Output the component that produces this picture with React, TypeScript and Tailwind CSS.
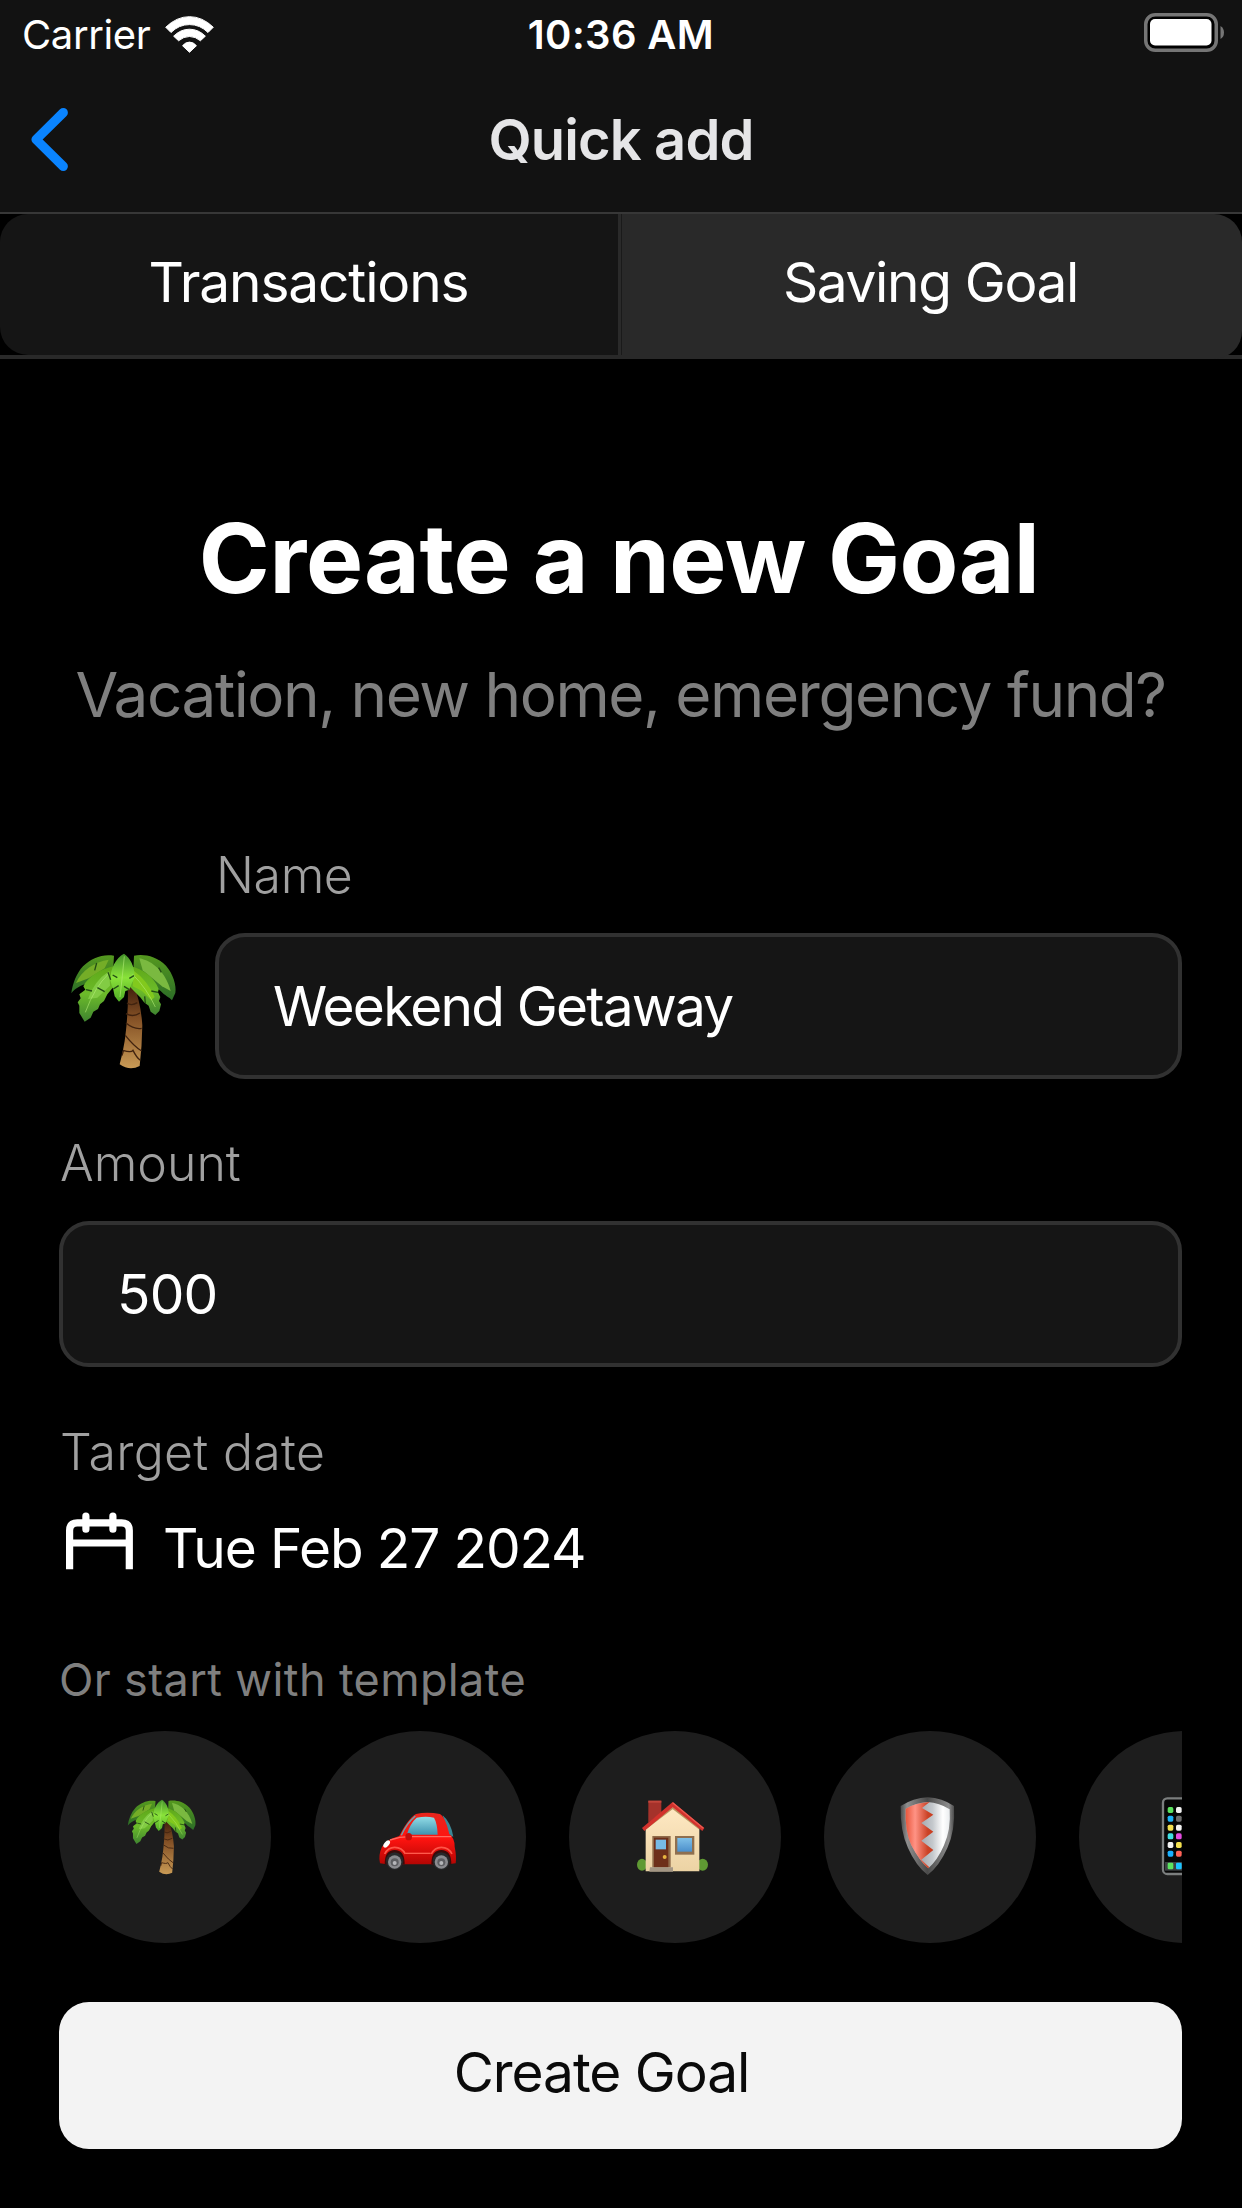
import type { ReactNode } from 'react';

function WifiIcon() {
  return (
    <svg viewBox="495 44 148 112" className="w-[49px] h-[37px]" fill="#fff" stroke="#fff" strokeWidth="3" strokeLinejoin="round">
      <path d="M497 78Q530 46 569 46Q608 46 641 78L625 94Q601 70 569 70Q537 70 513 94Z" />
      <path d="M521 105Q542 84 569 84Q596 84 617 105L602 119Q587 106 569 106Q551 106 536 119Z" />
      <path d="M548 134Q557 123 569 123Q581 123 590 134L569 154Z" />
    </svg>
  );
}

function BatteryIcon() {
  return (
    <svg viewBox="0 0 80 39" className="w-20 h-[39px]">
      <rect x="1.75" y="1.75" width="70.5" height="35.5" rx="9.5" fill="#000" stroke="#757575" strokeWidth="3.5" />
      <rect x="6" y="6" width="61.5" height="26.5" rx="5" fill="#fff" />
      <path d="M76.5 13Q80 15 80 19.5Q80 24 76.5 26Z" fill="#757575" />
    </svg>
  );
}

function BackIcon() {
  return (
    <svg viewBox="90 320 117 196" className="w-[39px] h-[65px]" fill="none">
      <path d="M190 337L108 418L190 499" stroke="#0a84ff" strokeWidth="28" strokeLinecap="round" strokeLinejoin="round" />
    </svg>
  );
}

function CalendarIcon() {
  return (
    <svg viewBox="0 0 70 60" className="w-[70px] h-[60px]" fill="none" stroke="#fff" strokeWidth="7.2">
      <path d="M5.6 58.3V19.5Q5.6 11.8 13.3 11.8H57.6Q65.3 11.8 65.3 19.5V58.3" />
      <path d="M5.6 32H65.3" />
      <path d="M21.9 5.2V18.2M48.9 5.2V18.2" strokeLinecap="round" />
    </svg>
  );
}

function PalmIcon({ id, className }: { id: string; className: string }) {
  return (
    <svg viewBox="-22 -8 360 360" className={className}>
      <defs>
        <linearGradient id={`${id}-trunk`} x1="0" y1="0" x2="0" y2="1">
          <stop offset="0" stopColor="#3a1a0b" />
          <stop offset="0.4" stopColor="#835025" />
          <stop offset="1" stopColor="#c99a55" />
        </linearGradient>
        <linearGradient id={`${id}-outer`} x1="0" y1="0" x2="0" y2="1">
          <stop offset="0" stopColor="#55991f" />
          <stop offset="1" stopColor="#2c6d27" />
        </linearGradient>
        <linearGradient id={`${id}-inner`} x1="0" y1="0" x2="0" y2="1">
          <stop offset="0" stopColor="#5fa818" />
          <stop offset="0.5" stopColor="#6cbb2a" />
          <stop offset="1" stopColor="#3f8430" />
        </linearGradient>
        <linearGradient id={`${id}-mid`} x1="0" y1="0" x2="0" y2="1">
          <stop offset="0" stopColor="#43902a" />
          <stop offset="0.5" stopColor="#8ae33a" />
          <stop offset="1" stopColor="#4faa25" />
        </linearGradient>
      </defs>
      <path d="M169 96C172 150 166 220 160 262Q154 300 145 332Q175 353 205 337Q212 280 213 215C210 170 202 130 186 92Z" fill={`url(#${id}-trunk)`} />
      <path d="M167 148Q180 158 198 147M164 180Q185 192 206 178M164 208Q188 228 211 224M162 245Q188 278 211 292M155 290Q180 298 185 290Q196 312 207 320M156 292L152 306" fill="none" stroke="#41230f" strokeWidth="4" />
      <path d="M128 6C95 0 60 12 35 38C15 60 4 90 0 119C12 104 24 98 40 92L124 72Z" fill={`url(#${id}-outer)`} />
      <path d="M188 6C215 0 255 6 284 36C305 60 316 95 312 118L302 140C294 130 280 126 268 112L186 56Z" fill={`url(#${id}-outer)`} />
      <path d="M204 14C244 22 282 54 298 112L272 98L214 50Z" fill="#7ab940" />
      <path d="M14 88C30 50 70 24 112 18L100 44L52 74Z" fill="#74ad27" />
      <path d="M126 38C84 48 50 70 36 98L42 108L24 122L28 134L19 146L24 156L24 178L40 204L58 192L66 174L80 166L86 152L98 142L108 122L126 100Z" fill={`url(#${id}-inner)`} />
      <path d="M178 38C214 46 248 70 262 106L260 116L267 130L263 142L269 152L264 172L252 184L238 174L232 156L218 146L208 132L196 120L174 98Z" fill={`url(#${id}-inner)`} />
      <path d="M188 52Q228 80 250 130L240 140L212 112L184 98Z" fill="#82c91d" />
      <path d="M114 52Q68 82 50 136L78 132L116 96Z" fill="#82cc44" />
      <path d="M158 0C134 12 116 46 117 80L122 98L126 108L130 128L143 144L158 130L162 112L174 108L180 92L190 72C190 36 176 12 158 0Z" fill={`url(#${id}-mid)`} />
      <path d="M159 8Q154 60 146 130M112 60Q70 100 42 176M184 62Q226 104 252 160" fill="none" stroke="#b5ee78" strokeWidth="2.5" opacity="0.7" />
      <path d="M118 78L110 56M44 108L62 112M78 102L100 114M124 64L138 72M188 66L174 74M126 106L142 96M174 108L158 98M222 148L220 128M260 116L240 112M76 28L70 50M270 56L262 42" fill="none" stroke="#234d14" strokeWidth="4" />
    </svg>
  );
}

function CarIcon() {
  return (
    <svg viewBox="1014 264 234 234" className="size-[78px] overflow-visible">
      <defs>
        <linearGradient id="car-body" x1="0" y1="0" x2="0" y2="1">
          <stop offset="0" stopColor="#e8261d" />
          <stop offset="0.5" stopColor="#ff1410" />
          <stop offset="1" stopColor="#b30503" />
        </linearGradient>
        <linearGradient id="car-glass" x1="0" y1="0" x2="0" y2="1">
          <stop offset="0" stopColor="#92dce6" />
          <stop offset="1" stopColor="#3f93b0" />
        </linearGradient>
      </defs>
      <path d="M1208 316Q1232 336 1240 380L1222 372Z" fill="#3c8796" />
      <path d="M1078 378C1092 350 1110 322 1128 312Q1160 305 1200 312Q1216 320 1228 372Q1244 384 1244 410Q1250 440 1247 460L1225 463H1040L1020 460Q1014 436 1026 410Q1040 388 1078 378Z" fill="url(#car-body)" />
      <path d="M1084 376Q1100 340 1126 318" fill="none" stroke="#63a8b3" strokeWidth="4" />
      <path d="M1100 374Q1112 338 1130 323Q1158 318 1182 323Q1192 340 1193 374Z" fill="url(#car-glass)" />
      <path d="M1050 390Q1084 378 1120 380H1234" fill="none" stroke="#ff6a60" strokeWidth="4" />
      <path d="M1096 430H1172" stroke="#ff5a4c" strokeWidth="4" />
      <path d="M1034 432Q1044 412 1064 412Q1086 412 1096 432M1174 432Q1184 412 1204 412Q1226 412 1236 432" fill="none" stroke="#ff5548" strokeWidth="5" />
      <ellipse cx="1106" cy="380" rx="10" ry="11" fill="#c40d0a" />
      <ellipse cx="1040" cy="402" rx="7" ry="13" fill="#fff" transform="rotate(40 1040 402)" />
      {[1064, 1204].map((cx) => (
        <g key={cx}>
          <path d={`M${cx - 30} 463Q${cx - 30} 420 ${cx} 420Q${cx + 30} 420 ${cx + 30} 463Z`} fill="#3a0b0a" />
          <circle cx={cx} cy="453" r="26" fill="#26282a" />
          <circle cx={cx} cy="456" r="20" fill="#8b8c90" />
          <circle cx={cx} cy="457" r="12" fill="#5d5e62" />
          <circle cx={cx} cy="459" r="6" fill="#b5b6ba" />
        </g>
      ))}
    </svg>
  );
}

function HouseIcon() {
  return (
    <svg viewBox="39 54 234 234" className="size-[78px]">
      <defs>
        <linearGradient id="house-wall" x1="0" y1="0" x2="0" y2="1">
          <stop offset="0" stopColor="#ffe9c4" />
          <stop offset="1" stopColor="#ecd3a4" />
        </linearGradient>
        <linearGradient id="house-glass" x1="0" y1="0" x2="0" y2="1">
          <stop offset="0" stopColor="#7fc0e8" />
          <stop offset="1" stopColor="#4c8fcb" />
        </linearGradient>
      </defs>
      <path d="M85 62H124V98L85 128Z" fill="#a5322b" />
      <path d="M85 62H124V68H85Z" fill="#c2453b" />
      <ellipse cx="66" cy="254" rx="15" ry="18" fill="#5f9a33" />
      <ellipse cx="248" cy="254" rx="16" ry="18" fill="#5f9a33" />
      <path d="M77 146L158 78L238 146V274H77Z" fill="url(#house-wall)" />
      <path d="M77 146L158 84L238 146" fill="none" stroke="#b99763" strokeWidth="5" />
      <path d="M66 144L158 66L253 144L247 153L158 82L73 153Z" fill="#d2322d" />
      <path d="M158 68L250 145" stroke="#ec5a50" strokeWidth="4" />
      <path d="M97 168H152V262H97Z" fill="#8f6b4a" />
      <path d="M102 173H145V262H102Z" fill="#6d2f1a" />
      <path d="M107 179H138V208H107Z" fill="#77bbe6" />
      <circle cx="134" cy="231" r="6" fill="#e6b340" />
      <path d="M90 262H159V275H88Z" fill="#a39684" />
      <path d="M165 168H223V224H165Z" fill="#8f6f4f" />
      <path d="M172 174H216V215H172Z" fill="url(#house-glass)" />
    </svg>
  );
}

function ShieldIcon() {
  return (
    <svg viewBox="0 0 234 234" className="size-[78px] overflow-visible">
      <defs>
        <linearGradient id="shield-rim" x1="0" y1="0" x2="1" y2="0">
          <stop offset="0" stopColor="#4b4b4b" />
          <stop offset="0.12" stopColor="#8f8f8f" />
          <stop offset="0.5" stopColor="#4a4a4a" />
          <stop offset="0.9" stopColor="#8d8d8d" />
          <stop offset="1" stopColor="#484848" />
        </linearGradient>
        <linearGradient id="shield-red" gradientUnits="userSpaceOnUse" x1="52" y1="0" x2="136" y2="0">
          <stop offset="0" stopColor="#e8553a" />
          <stop offset="0.35" stopColor="#ff9385" />
          <stop offset="0.8" stopColor="#cb4327" />
          <stop offset="1" stopColor="#c93c1e" />
        </linearGradient>
        <linearGradient id="shield-white" gradientUnits="userSpaceOnUse" x1="100" y1="0" x2="186" y2="0">
          <stop offset="0" stopColor="#a5aab0" />
          <stop offset="0.4" stopColor="#c5c9cd" />
          <stop offset="0.75" stopColor="#fff" />
          <stop offset="1" stopColor="#e9ecee" />
        </linearGradient>
      </defs>
      <path d="M119 -2Q162 0 198 24Q202 100 178 150Q154 204 119 231Q84 204 60 150Q36 100 38 24Q76 0 119 -2Z" fill="url(#shield-rim)" />
      <path d="M119 12Q154 14 185 34Q189 96 168 142Q148 188 121 211Q94 188 70 142Q50 98 53 32Q84 14 119 12Z" fill="url(#shield-white)" />
      <path d="M125 12L102 30L136 50L100 75L136 101L100 128L136 156L100 185L124 208L120 211Q94 188 70 142Q50 98 53 32Q84 14 125 12Z" fill="url(#shield-red)" />
    </svg>
  );
}

const appRows = [
  { y: 36, colors: ['#5be35f', '#f2f2f2', '#f3d94a', '#19b7ff'] },
  { y: 62, colors: ['#1bb2f7', '#6d6d6d', '#f2f2f2', '#5be35f'] },
  { y: 89, colors: ['#f3e04f', '#f2f2f2', '#19b7ff', '#ff6257'] },
  { y: 115, colors: ['#3fdfe3', '#e34be0', '#f2f2f2', '#5be35f'] },
  { y: 141, colors: ['#f2f2f2', '#f3e04f', '#19b7ff', '#e34be0'] },
  { y: 167, colors: ['#19b0ff', '#ff6257', '#f2f2f2', '#f3e04f'] },
];

function PhoneIcon() {
  return (
    <svg viewBox="0 0 234 234" className="size-[78px] overflow-visible">
      <rect x="60" y="1" width="114" height="227" rx="13" fill="#070707" stroke="#7b7e7e" strokeWidth="7" />
      <rect x="66" y="192" width="102" height="26" fill="#3c4244" />
      {appRows.map((row) =>
        row.colors.map((fill, i) => (
          <rect key={`${row.y}-${i}`} x={74 + i * 25} y={row.y - 9} width="17" height="18" rx="5" fill={fill} />
        ))
      )}
      <rect x="74" y="194" width="17" height="20" rx="4" fill="#5be35f" />
      <rect x="99" y="194" width="17" height="20" rx="4" fill="#19c3ff" />
      <rect x="124" y="194" width="17" height="20" rx="4" fill="#f2f2f2" />
    </svg>
  );
}

const templates: { name: string; icon: ReactNode }[] = [
  { name: 'vacation', icon: <PalmIcon id="palm-template" className="size-[78px]" /> },
  { name: 'car', icon: <CarIcon /> },
  { name: 'home', icon: <HouseIcon /> },
  { name: 'emergency', icon: <ShieldIcon /> },
  { name: 'phone', icon: <PhoneIcon /> },
];

function Label({ children }: { children: ReactNode }) {
  return <p className="pl-px text-[50px] leading-[60px] font-light text-[#a0a0a0]">{children}</p>;
}

function Field({ children }: { children: ReactNode }) {
  return (
    <div className="mt-7 flex h-[146px] items-center rounded-[30px] border-4 border-[#313131] bg-[#151515] pl-[54px] text-[55px] text-white">
      {children}
    </div>
  );
}

export default function App() {
  return (
    <div className="flex h-[2208px] w-[1242px] flex-col overflow-hidden bg-black font-['Inter',sans-serif] text-white">
      <header className="border-b-2 border-[#373737] bg-[#121212]">
        <div className="grid h-[69px] grid-cols-3 items-center pl-[22px] pr-[18px] text-[40px] leading-[69px]">
          <div className="flex items-center gap-[15px]">
            <span className="tracking-[-0.4px]">Carrier</span>
            <WifiIcon />
          </div>
          <span className="pr-[4px] text-center font-semibold tracking-[0.4px]">10:36 AM</span>
          <div className="-mt-1 flex justify-end">
            <BatteryIcon />
          </div>
        </div>
        <div className="grid h-[143px] grid-cols-[69px_1fr_69px] items-center pb-[2px]">
          <div className="flex justify-end">
            <BackIcon />
          </div>
          <h2 className="text-center text-[56px] font-semibold tracking-[-0.85px] text-[#e5e5e7]">Quick add</h2>
        </div>
      </header>

      <nav className="flex h-[145px] border-b-4 border-[#292929] text-[55px]">
        <div className="flex w-[618px] items-center justify-center rounded-l-[28px] bg-[#151515] pr-[1px] pb-[5px] tracking-[-1.15px]">
          Transactions
        </div>
        <div className="w-1 border-r border-[#1a1a1a] bg-[#2a2a2a]" />
        <div className="-mb-1 flex flex-1 items-center justify-center rounded-r-[28px] bg-[#292929] pr-[3px] pb-[9px] tracking-[-1.35px]">
          Saving Goal
        </div>
      </nav>

      <main className="flex flex-col pr-[60px] pl-[59px]">
        <h1 className="mt-[141px] pr-[3px] text-center text-[96px] leading-[116px] font-bold tracking-[-0.55px]">
          <span className="tracking-[-0.2px]">Create</span> a new Goal
        </h1>
        <p className="mt-[41px] text-center text-[62px] leading-[76px] whitespace-nowrap tracking-[-1.46px] text-[#7f7f7f]">
          Vacation, new home, emergency fund?
        </p>

        <section className="mt-[112px] flex items-end">
          <div className="mb-[8px] flex w-[156px] pl-[5px]">
            <PalmIcon id="palm-goal" className="size-[120px]" />
          </div>
          <div className="flex-1">
            <Label>
              <span className="tracking-[-0.4px]">Name</span>
            </Label>
            <Field>
              <span className="tracking-[-1.8px]">Weekend Getaway</span>
            </Field>
          </div>
        </section>

        <section className="mt-[54px]">
          <Label>Amount</Label>
          <Field>
            <span className="tracking-[-0.8px]">500</span>
          </Field>
        </section>

        <section className="mt-[55px]">
          <Label>
            <span className="tracking-[0.3px]">Target date</span>
          </Label>
          <div className="mt-[33px] flex items-start gap-[29px] pl-[5px]">
            <div className="-mt-1">
              <CalendarIcon />
            </div>
            <span className="text-[55px] leading-[66px] tracking-[-1.15px]">Tue Feb 27 2024</span>
          </div>
        </section>

        <p className="mt-[72px] text-[45px] leading-[54px] tracking-[0.37px] text-[#7f7f7f]">Or start with template</p>
        <div className="mt-6 flex gap-[43px] overflow-hidden">
          {templates.map((template) => (
            <div
              key={template.name}
              className="flex size-[212px] shrink-0 items-center justify-center rounded-full bg-[#1d1d1d] pr-[7px]"
            >
              {template.icon}
            </div>
          ))}
        </div>

        <button className="mt-[59px] h-[147px] rounded-[30px] bg-[#f3f3f3] pr-[38px] pb-[7px] text-[55px] tracking-[-1.05px] text-[#0a0a0a]">
          Create Goal
        </button>
      </main>
    </div>
  );
}
